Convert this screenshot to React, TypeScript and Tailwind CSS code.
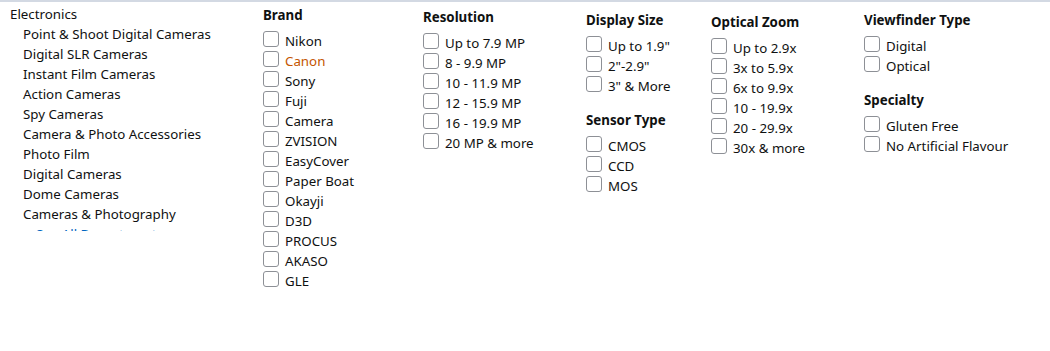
import React from "react";

const DEPARTMENTS = [
  "Point & Shoot Digital Cameras",
  "Digital SLR Cameras",
  "Instant Film Cameras",
  "Action Cameras",
  "Spy Cameras",
  "Camera & Photo Accessories",
  "Photo Film",
  "Digital Cameras",
  "Dome Cameras",
  "Cameras & Photography",
];

const BRANDS = [
  "Nikon", "Canon", "Sony", "Fuji", "Camera", "ZVISION", "EasyCover",
  "Paper Boat", "Okayji", "D3D", "PROCUS", "AKASO", "GLE",
];

const RESOLUTION = ["Up to 7.9 MP", "8 - 9.9 MP", "10 - 11.9 MP", "12 - 15.9 MP", "16 - 19.9 MP", "20 MP & more"];
const DISPLAY = ["Up to 1.9\"", "2\"-2.9\"", "3\" & More"];
const SENSOR = ["CMOS", "CCD", "MOS"];
const ZOOM = ["Up to 2.9x", "3x to 5.9x", "6x to 9.9x", "10 - 19.9x", "20 - 29.9x", "30x & more"];
const VIEWFINDER = ["Digital", "Optical"];
const SPECIALTY = ["Gluten Free", "No Artificial Flavour"];

function Option({ label, active }: { label: string; active?: boolean }) {
  return (
    <label className="flex h-5 items-start gap-[6px] cursor-pointer">
      <span className="w-4 h-4 shrink-0 rounded-[3px] border border-[#8d9096] bg-white" />
      <span className={`leading-5 whitespace-nowrap ${active ? "text-[#c45500]" : "text-[#0f1111]"}`}>
        {label}
      </span>
    </label>
  );
}

function Group({ title, items, className = "" }: { title: string; items: string[]; className?: string }) {
  return (
    <div className={className}>
      <div className="font-bold leading-5 mb-[6px] text-[#0f1111]">{title}</div>
      {items.map((it) => (
        <Option key={it} label={it} active={it === "Canon"} />
      ))}
    </div>
  );
}

export default function App() {
  return (
    <div className="w-full h-[351px] bg-white border-t-2 border-[#d3d9e3] flex text-[13.3px] font-['Noto_Sans',sans-serif] text-[#0f1111]">
      {/* Department list, cut off below the last item */}
      <div className="w-[263px] shrink-0 pl-[10px] pt-[2px]">
        <div className="h-[227px] overflow-hidden leading-5">
          <div>Electronics</div>
          <ul className="pl-[13px]">
            {DEPARTMENTS.map((d) => (
              <li key={d} className="whitespace-nowrap">{d}</li>
            ))}
            <li className="pl-[13px] text-[#0066c0]">See All Departments</li>
          </ul>
        </div>
      </div>

      <div className="w-[160px] shrink-0 pt-[3px]">
        <Group title="Brand" items={BRANDS} />
      </div>

      <div className="w-[163px] shrink-0 pt-[5px]">
        <Group title="Resolution" items={RESOLUTION} />
      </div>

      <div className="w-[125px] shrink-0 pt-[8px]">
        <Group title="Display Size" items={DISPLAY} />
        <Group title="Sensor Type" items={SENSOR} className="mt-[14px]" />
      </div>

      <div className="w-[153px] shrink-0 pt-[10px]">
        <Group title="Optical Zoom" items={ZOOM} />
      </div>

      <div className="flex-1 pt-[8px]">
        <Group title="Viewfinder Type" items={VIEWFINDER} />
        <Group title="Specialty" items={SPECIALTY} className="mt-[14px]" />
      </div>
    </div>
  );
}
